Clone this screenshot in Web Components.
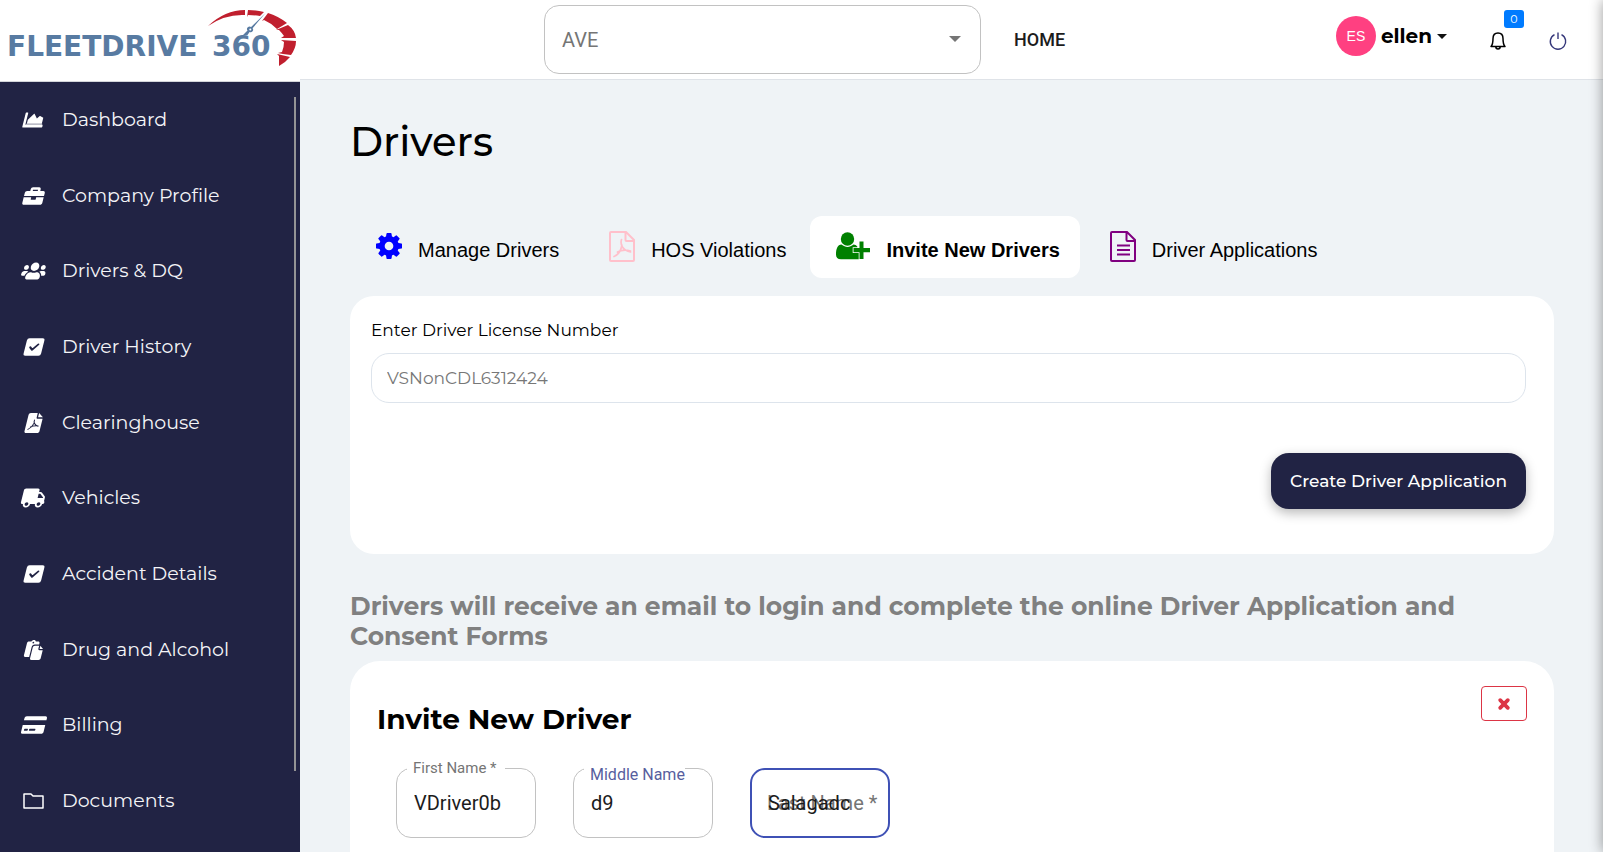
<!DOCTYPE html>
<html lang="en">
<head>
<meta charset="utf-8">
<meta name="viewport" content="width=device-width, initial-scale=1">
<title>FleetDrive 360 - Drivers</title>
<style>
  html { height: 100%; }
  body {
    margin: 0;
    min-height: 100%;
    display: flex;
    background: #eff3f6;
    color: #000;
    --brand: Montserrat, Inter, sans-serif;
    --ui: Roboto, sans-serif;
    --plain: "Liberation Sans", Arial, sans-serif;
    --navy: #212344;
    font-family: var(--brand);
  }
</style>
</head>
<body>
<fleet-app></fleet-app>

<script>
const define = (name, html, setup) => {
  const tpl = document.createElement('template');
  tpl.innerHTML = '<style>*{box-sizing:border-box}</style>' + html;
  customElements.define(name, class extends HTMLElement {
    constructor() {
      super();
      this.attachShadow({ mode: 'open' }).append(tpl.content.cloneNode(true));
    }
    connectedCallback() { if (setup) setup(this, this.shadowRoot); }
  });
};

const ICONS = {
  chart: ['0 0 512 512', '<path d="M500 384c6.600 0 12 5.400 12 12v40c0 6.600-5.400 12-12 12H12c-6.600 0-12-5.400-12-12V76c0-6.600 5.400-12 12-12h40c6.600 0 12 5.400 12 12v308h436z"/><path d="M372 160L320 216l-85-114c-5-7-15-6-20 1L96 248v104h384V200l-80-42c-10-6-20-4-28 2z"/><path d="M64 352h432v32H64z" opacity=".7"/>'],
  briefcase: ['0 0 512 512', '<path d="M320 336c0 8.840-7.160 16-16 16h-96c-8.840 0-16-7.160-16-16v-48H0v144c0 25.600 22.400 48 48 48h416c25.600 0 48-22.400 48-48V288H320v48zm144-208h-80V80c0-25.600-22.400-48-48-48H176c-25.600 0-48 22.400-48 48v48H48c-25.600 0-48 22.400-48 48v80h512v-80c0-25.600-22.400-48-48-48zm-144 0H192V96h128v32z"/>'],
  users: ['0 0 640 512', '<path d="M96 224c35.300 0 64-28.700 64-64s-28.700-64-64-64-64 28.700-64 64 28.700 64 64 64zm448 0c35.300 0 64-28.700 64-64s-28.700-64-64-64-64 28.700-64 64 28.700 64 64 64zm32 32h-64c-17.600 0-33.500 7.100-45.100 18.600 40.300 22.100 68.900 62 75.100 109.400h66c17.700 0 32-14.300 32-32v-32c0-35.300-28.700-64-64-64zm-256 0c61.900 0 112-50.100 112-112S381.900 32 320 32 208 82.100 208 144s50.100 112 112 112zm76.800 32h-8.300c-20.800 10-43.900 16-68.500 16s-47.600-6-68.500-16h-8.300C179.600 288 128 339.600 128 403.200V432c0 26.500 21.500 48 48 48h288c26.500 0 48-21.500 48-48v-28.800c0-63.600-51.600-115.200-115.200-115.200zm-223.700-13.400C161.500 263.100 145.600 256 128 256H64c-35.300 0-64 28.700-64 64v32c0 17.700 14.300 32 32 32h65.900c6.300-47.400 34.900-87.300 75.200-109.400z"/>'],
  check: ['0 0 512 512', '<rect x="32" y="32" width="448" height="448" rx="56"/><path d="M160 262l64 64 128-136" fill="none" stroke="#212344" stroke-width="48" stroke-linecap="round" stroke-linejoin="round"/>'],
  pdf: ['0 0 512 512', '<path d="M64 48c0-26 22-48 48-48h176v112c0 20 12 32 32 32h128v320c0 26-22 48-48 48H112c-26 0-48-22-48-48zM324 0l124 110H324z"/><path d="M250 180c-12 60 10 110 130 158M262 250c-20 70-50 130-120 170M190 356c60-26 110-34 190-26" fill="none" stroke="#212344" stroke-width="26" stroke-linecap="round"/>'],
  truck: ['0 0 640 512', '<path d="M608 352V243.900c0-12.700-5.100-24.900-14.100-33.900L494 110.100c-9-9-21.200-14.100-33.900-14.100H416V48c0-26.500-21.500-48-48-48H48C21.500 0 0 21.500 0 48v320c0 26.500 21.500 48 48 48h16c0 53 43 96 96 96s96-43 96-96h128c0 53 43 96 96 96s96-43 96-96h16c26 0 32-14 32-32v-32zM160 464c-26.500 0-48-21.500-48-48s21.500-48 48-48 48 21.500 48 48-21.500 48-48 48zm320 0c-26.500 0-48-21.500-48-48s21.500-48 48-48 48 21.500 48 48-21.500 48-48 48zm80-208H416V144h44.100l99.900 99.900V256z"/>'],
  paste: ['0 0 512 512', '<path d="M32 80c0-24 16-42 42-42h62c8-24 28-38 56-38s48 14 56 38h62c26 0 42 18 42 42v32H240c-40 0-64 24-64 64v256H74c-26 0-42-18-42-42z"/><circle cx="192" cy="66" r="22" fill="#212344"/><path d="M208 188c0-24 16-44 44-44h108v76c0 26 14 40 40 40h80v208c0 26-18 44-44 44H252c-28 0-44-18-44-44zM392 144l88 84h-88z"/>'],
  card: ['0 0 576 512', '<path d="M0 432c0 26.500 21.500 48 48 48h480c26.500 0 48-21.500 48-48V256H0v176zm192-68c0-6.600 5.400-12 12-12h136c6.600 0 12 5.400 12 12v28c0 6.600-5.400 12-12 12H204c-6.600 0-12-5.400-12-12v-28zm-128 0c0-6.600 5.400-12 12-12h72c6.600 0 12 5.400 12 12v28c0 6.600-5.400 12-12 12H76c-6.600 0-12-5.400-12-12v-28zM576 80v56H0V80c0-26.500 21.500-48 48-48h480c26.500 0 48 21.500 48 48z"/>'],
  folder: ['0 0 20 20', '<path d="M0 17V3h7l2 2h10v12z" fill="none" stroke="currentColor" stroke-width="1.500" stroke-linejoin="round"/>'],
  gear: ['0 128 1536 1536', '<path d="M1024 896q0-106-75-181t-181-75-181 75-75 181 75 181 181 75 181-75 75-181zm512-109v222q0 12-8 23t-20 13l-185 28q-19 54-39 91 35 50 107 138 10 12 10 25t-9 23q-27 37-99 108t-94 71q-12 0-26-9l-138-108q-44 23-91 38-16 136-29 186-7 28-36 28H657q-14 0-24.500-8.500t-11.500-21.500l-28-184q-49-16-90-37l-141 107q-10 9-25 9-14 0-25-11-126-114-165-168-7-10-7-23 0-12 8-23 15-21 51-66.500t54-70.500q-27-50-41-99l-183-27q-13-2-21-12.500t-8-23.500V783q0-12 8-23t19-13l186-28q14-46 39-92-40-57-107-138-10-12-10-24 0-10 9-23 26-36 98.500-107.500T337 263q13 0 26 10l138 107q44-23 91-38 16-136 29-186 7-28 36-28h222q14 0 24.500 8.500T915 158l28 184q49 16 90 37l142-107q9-9 24-9 13 0 25 10 129 119 165 170 7 8 7 22 0 12-8 23-15 21-51 66.500t-54 70.500q26 50 41 98l183 28q13 2 21 12.500t8 23.500z"/>'],
  pdfline: ['0 0 26 31', '<path d="M2 1h15l8 8v20q0 1-1 1H2q-1 0-1-1V2q0-1 1-1zM16.500 1v8q0 1 1 1H25" fill="none" stroke="currentColor" stroke-width="2"/><path d="M12.500 8.500c-1.500 5 1 11 9 12.500M13 14c-1 5-4 10-8 11.500M8.500 21c4-2 8-2.500 13-1" fill="none" stroke="currentColor" stroke-width="1.700" stroke-linecap="round"/>'],
  textline: ['0 0 26 31', '<path d="M2 1h15l8 8v20q0 1-1 1H2q-1 0-1-1V2q0-1 1-1zM16.500 1v8q0 1 1 1H25M7 14.500h13M7 19h13M7 23.500h13" fill="none" stroke="currentColor" stroke-width="2"/>'],
  userplus: ['0 0 34 28', '<circle cx="11.500" cy="7" r="6.700"/><path d="M5.500 12.500c4 3.200 8 3.200 12 0 1.500 0 2.900.700 3.800 2V15.200H16.700V21H22.700v6.200H5c-3.500 0-5-1.700-5-4.700 0-5.500 1.500-10 5.500-10z"/><path d="M23.500 9.500h4V16H34v4.200h-6.500V27h-4v-6.800h-6V16h6z"/>'],
  bell: ['0 0 16 18', '<path d="M1 14.500c1.500-1.500 2-3.500 2-8C3 3 5 1 8 1s5 2 5 5.500c0 4.500.500 6.500 2 8zM5.800 14.500c0 3.400 4.400 3.400 4.400 0" fill="none" stroke="currentColor" stroke-width="1.500" stroke-linejoin="round"/>'],
  power: ['0 0 18 18', '<path d="M5.500 2.700a7.700 7.700 0 1 0 7 0M9 .500V7" fill="none" stroke="currentColor" stroke-width="1.400"/>'],
  cross: ['0 0 12 12', '<path d="M2.200 2.200l7.600 7.600M9.800 2.200L2.200 9.800" fill="none" stroke="currentColor" stroke-width="3.800" stroke-linecap="round"/>'],
};

define('fleet-icon', `
<style>
  :host { display: inline-flex; width: 20px; height: 20px; flex: none; }
  svg { width: 100%; height: 100%; fill: currentColor; overflow: visible; }
</style><svg aria-hidden="true"></svg>`, (el, root) => {
  const [box, shapes] = ICONS[el.getAttribute('name')];
  const svg = root.querySelector('svg');
  svg.setAttribute('viewBox', box);
  svg.innerHTML = shapes;
});

define('fleet-logo', `
<style>
  :host { display: block; height: 82px; border-bottom: 1px solid #d3d5da; background: #fff; }
  svg { display: block; width: 300px; height: 81px; }
  text { font: bold 28px "DejaVu Sans", sans-serif; fill: #587ba2; }
</style>
<svg viewBox="0 0 300 81" role="img" aria-label="FleetDrive 360">
  <text x="7" y="56">FLEETDRIVE</text>
  <text x="212" y="56">360</text>
  <path fill="#c01f2e" d="M208 26Q225 10 245 10L245 15Q225 14 208 26zM248 10Q257 10 264 12L260 16Q254 15 248 15L247 17zM268 13Q278 16 287 23L277 29Q271 23 264 20L262 21zM288 25Q295 30 296 38L284 38L281 38 284 36Q282 33 279 30L276 30zM296 41Q296 48 291 55L283 54 278 53 282 52Q284 47 284 42L281 40zM290 57Q286 62 279 66L279 56 277 54z"/>
  <path fill="#587ba2" d="M265.500 13L252.600 28.200a2.500 2.500 0 0 1-3 3.800L247.500 35H243l4.500-4.500a2.500 2.500 0 0 1 3.600-3.400z"/>
  <circle cx="250.300" cy="29.500" r="1" fill="#fff"/>
</svg>`);

define('nav-item', `
<style>
  :host { display: flex; flex: 1; }
  a { flex: 1; display: flex; align-items: center; gap: 16px; padding-left: 22px; color: #f4f4f7; text-decoration: none; font-size: 19px; line-height: 24px; }
  .ic { width: 24px; height: 20px; display: flex; color: #fff; }
  .ic.slant { transform: skewX(-14deg); }
  .ic fleet-icon { width: 24px; }
</style>
<a href="#"><span class="ic"></span><slot></slot></a>`, (el, root) => {
  const name = el.getAttribute('icon');
  const icon = document.createElement('fleet-icon');
  icon.setAttribute('name', name);
  const box = root.querySelector('.ic');
  if (name !== 'folder') box.classList.add('slant');
  box.replaceChildren(icon);
});

define('side-bar', `
<style>
  :host { display: block; width: 300px; flex: none; background: var(--navy); }
  .scroll { position: relative; }
  nav { display: flex; flex-direction: column; min-height: 757px; }
  .thumb { position: absolute; right: 4px; top: 15px; width: 2px; height: 674px; background: #939395; }
</style>
<fleet-logo></fleet-logo>
<div class="scroll">
  <nav aria-label="Main">
    <nav-item icon="chart">Dashboard</nav-item>
    <nav-item icon="briefcase">Company Profile</nav-item>
    <nav-item icon="users">Drivers &amp; DQ</nav-item>
    <nav-item icon="check">Driver History</nav-item>
    <nav-item icon="pdf">Clearinghouse</nav-item>
    <nav-item icon="truck">Vehicles</nav-item>
    <nav-item icon="check">Accident Details</nav-item>
    <nav-item icon="paste">Drug and Alcohol</nav-item>
    <nav-item icon="card">Billing</nav-item>
    <nav-item icon="folder">Documents</nav-item>
  </nav>
  <div class="thumb"></div>
</div>`);

define('top-bar', `
<style>
  :host { display: flex; align-items: center; height: 80px; flex: none; background: #fff; border-bottom: 1px solid #dfe3e8; padding: 0 36px 0 244px; }
  .company { position: relative; flex: 0 1 437px; display: flex; }
  select { appearance: none; width: 100%; height: 69px; border: 1px solid #c2c2c2; border-radius: 15px; background: #fff; padding: 0 17px; font: 20px/24px var(--ui); color: #757575; }
  .company::after { content: ""; position: absolute; right: 20px; top: 31px; border: 6px solid transparent; border-top-color: #757575; border-bottom: 0; pointer-events: none; }
  .home { margin-left: 33px; font: 500 18px/24px var(--ui); color: #1c1c1c; text-decoration: none; }
  .right { margin-left: auto; display: flex; align-items: center; }
  button { border: 0; background: none; padding: 0; color: #000; display: flex; align-items: center; font: 700 20px/24px var(--brand); }
  .avatar { width: 40px; height: 40px; border-radius: 50%; background: #ff4081; color: #fff; display: grid; place-items: center; font: 14px/16px var(--plain); margin-right: 5px; }
  .user { padding-bottom: 7px; }
  .user::after { content: ""; border: 5px solid transparent; border-top-color: #111; border-bottom: 0; margin-left: 5px; }
  .bell { position: relative; margin-left: 43px; }
  .bell fleet-icon { width: 16px; height: 18px; }
  .badge { position: absolute; left: 14px; top: -22px; width: 20px; height: 18px; border-radius: 3px; background: #007bff; color: #fff; display: grid; place-items: center; font: 11px/12px var(--brand); }
  .power { margin-left: 43px; color: #35377a; }
  .power fleet-icon { width: 18px; height: 18px; }
  .bell, .power { margin-top: 2px; }
</style>
<div class="company">
  <select aria-label="Company"><option>AVE</option></select>
</div>
<a class="home" href="#">HOME</a>
<div class="right">
  <button class="user"><span class="avatar">ES</span>ellen</button>
  <button class="bell" aria-label="Notifications"><fleet-icon name="bell"></fleet-icon><span class="badge">0</span></button>
  <button class="power" aria-label="Log out"><fleet-icon name="power"></fleet-icon></button>
</div>`);

define('tab-link', `
<style>
  :host { display: block; }
  a { display: flex; align-items: center; gap: 16px; height: 62px; padding: 0 20px 2px 26px; border-radius: 12px; color: #000; text-decoration: none; font: 20px/24px var(--plain); }
  :host([active]) a { background: #fff; font-weight: 700; }
  span { padding-top: 8px; }
  ::slotted(fleet-icon) { width: 26px; height: 31px; }
  ::slotted(fleet-icon[name="gear"]) { height: 26px; }
  ::slotted(fleet-icon[name="userplus"]) { width: 34px; height: 28px; }
</style>
<a href="#"><slot name="icon"></slot><span><slot></slot></span></a>`);

define('outlined-field', `
<style>
  :host { display: block; position: relative; width: 140px; }
  input { display: block; width: 100%; height: 70px; border: 1px solid #c2c2c2; border-radius: 15px; background: transparent; padding: 0 17px; font: 20px/24px var(--ui); color: #1c1c1c; outline: 0; }
  label { position: absolute; left: 11px; padding: 0 6px; white-space: nowrap; font-family: var(--ui); color: #757575; pointer-events: none; }
  :host([state="floating"]) label { top: -8px; font-size: 15px; line-height: 16px; background: #fff; padding-right: 8px; }
  :host([state="moving"]) label { top: -1px; padding-right: 0; font-size: 16px; line-height: 16px; background: #fff; color: #575e9e; }
  :host([state="focused"]) label { top: 23px; font-size: 20px; line-height: 24px; }
  :host([state="focused"]) input { position: relative; border: 2px solid #3f51b5; padding: 0 16px; }
</style>
<label for="f"></label><input id="f" type="text">`, (el, root) => {
  root.querySelector('label').textContent = el.getAttribute('label');
  root.querySelector('input').value = el.getAttribute('value');
  if (el.getAttribute('state') !== 'focused') root.append(root.querySelector('label'));
});

define('license-card', `
<style>
  :host { display: block; background: #fff; border-radius: 24px; padding: 22px 28px 45px 21px; }
  label { display: block; font-size: 17px; line-height: 24px; }
  input { display: block; width: 100%; height: 50px; margin: 11px 0 50px; border: 1px solid #dde4ec; border-radius: 18px; padding: 0 15px; font: 17px/24px var(--brand); color: #777; background: #fff; outline: 0; }
  button { display: block; margin-left: auto; height: 56px; padding: 0 19px; border: 0; border-radius: 18px; background: var(--navy); color: #fff; font: 500 17px/24px var(--brand); box-shadow: 0 4px 12px rgba(0,0,0,.28); }
</style>
<label for="lic">Enter Driver License Number</label>
<input id="lic" type="text" value="VSNonCDL6312424">
<button>Create Driver Application</button>`);

define('invite-card', `
<style>
  :host { display: block; background: #fff; border-radius: 30px 30px 0 0; padding: 25px 27px 14px; }
  header { display: flex; justify-content: space-between; align-items: flex-start; }
  h2 { margin: 16px 0 0; font-size: 28px; line-height: 34px; font-weight: 700; }
  button { width: 46px; height: 35px; border: 1px solid #dc3545; border-radius: 4px; background: #fff; color: #dc3545; padding: 0; display: grid; place-items: center; }
  button fleet-icon { width: 12px; height: 12px; }
  form { display: flex; flex-wrap: wrap; gap: 37px; padding: 32px 19px 0; }
</style>
<header><h2>Invite New Driver</h2><button aria-label="Close"><fleet-icon name="cross"></fleet-icon></button></header>
<form>
  <outlined-field state="floating" label="First Name *" value="VDriver0b"></outlined-field>
  <outlined-field state="moving" label="Middle Name" value="d9"></outlined-field>
  <outlined-field state="focused" label="Last Name *" value="Salagadc"></outlined-field>
</form>`);

define('drivers-page', `
<style>
  :host { flex: 1; display: flex; flex-direction: column; padding: 37px 49px 0 50px; }
  h1 { margin: 0 0 49px; font-size: 40px; line-height: 50px; font-weight: 500; }
  nav { display: flex; flex-wrap: wrap; gap: 4px; margin-bottom: 18px; }
  h3 { margin: 37px 0 10px; font-size: 25px; line-height: 30px; font-weight: 700; color: #808080; }
  invite-card { flex: 1; }
</style>
<h1>Drivers</h1>
<nav aria-label="Driver sections">
  <tab-link><fleet-icon slot="icon" name="gear" style="color:#00f"></fleet-icon>Manage Drivers</tab-link>
  <tab-link><fleet-icon slot="icon" name="pdfline" style="color:pink"></fleet-icon>HOS Violations</tab-link>
  <tab-link active><fleet-icon slot="icon" name="userplus" style="color:green"></fleet-icon>Invite New Drivers</tab-link>
  <tab-link><fleet-icon slot="icon" name="textline" style="color:purple"></fleet-icon>Driver Applications</tab-link>
</nav>
<license-card></license-card>
<h3>Drivers will receive an email to login and complete the online Driver Application and Consent Forms</h3>
<invite-card></invite-card>`);

define('edge-panel', `
<style>
  :host { position: fixed; top: 0; bottom: 0; left: 100%; width: 20px; background: #fff; box-shadow: 0 0 14px rgba(0,0,0,.4); }
</style>`);

define('fleet-app', `
<style>
  :host { flex: 1; display: flex; }
  .main { flex: 1; min-width: 0; display: flex; flex-direction: column; }
</style>
<side-bar></side-bar>
<div class="main"><top-bar></top-bar><drivers-page></drivers-page></div>
<edge-panel></edge-panel>`);
</script>
</body>
</html>
